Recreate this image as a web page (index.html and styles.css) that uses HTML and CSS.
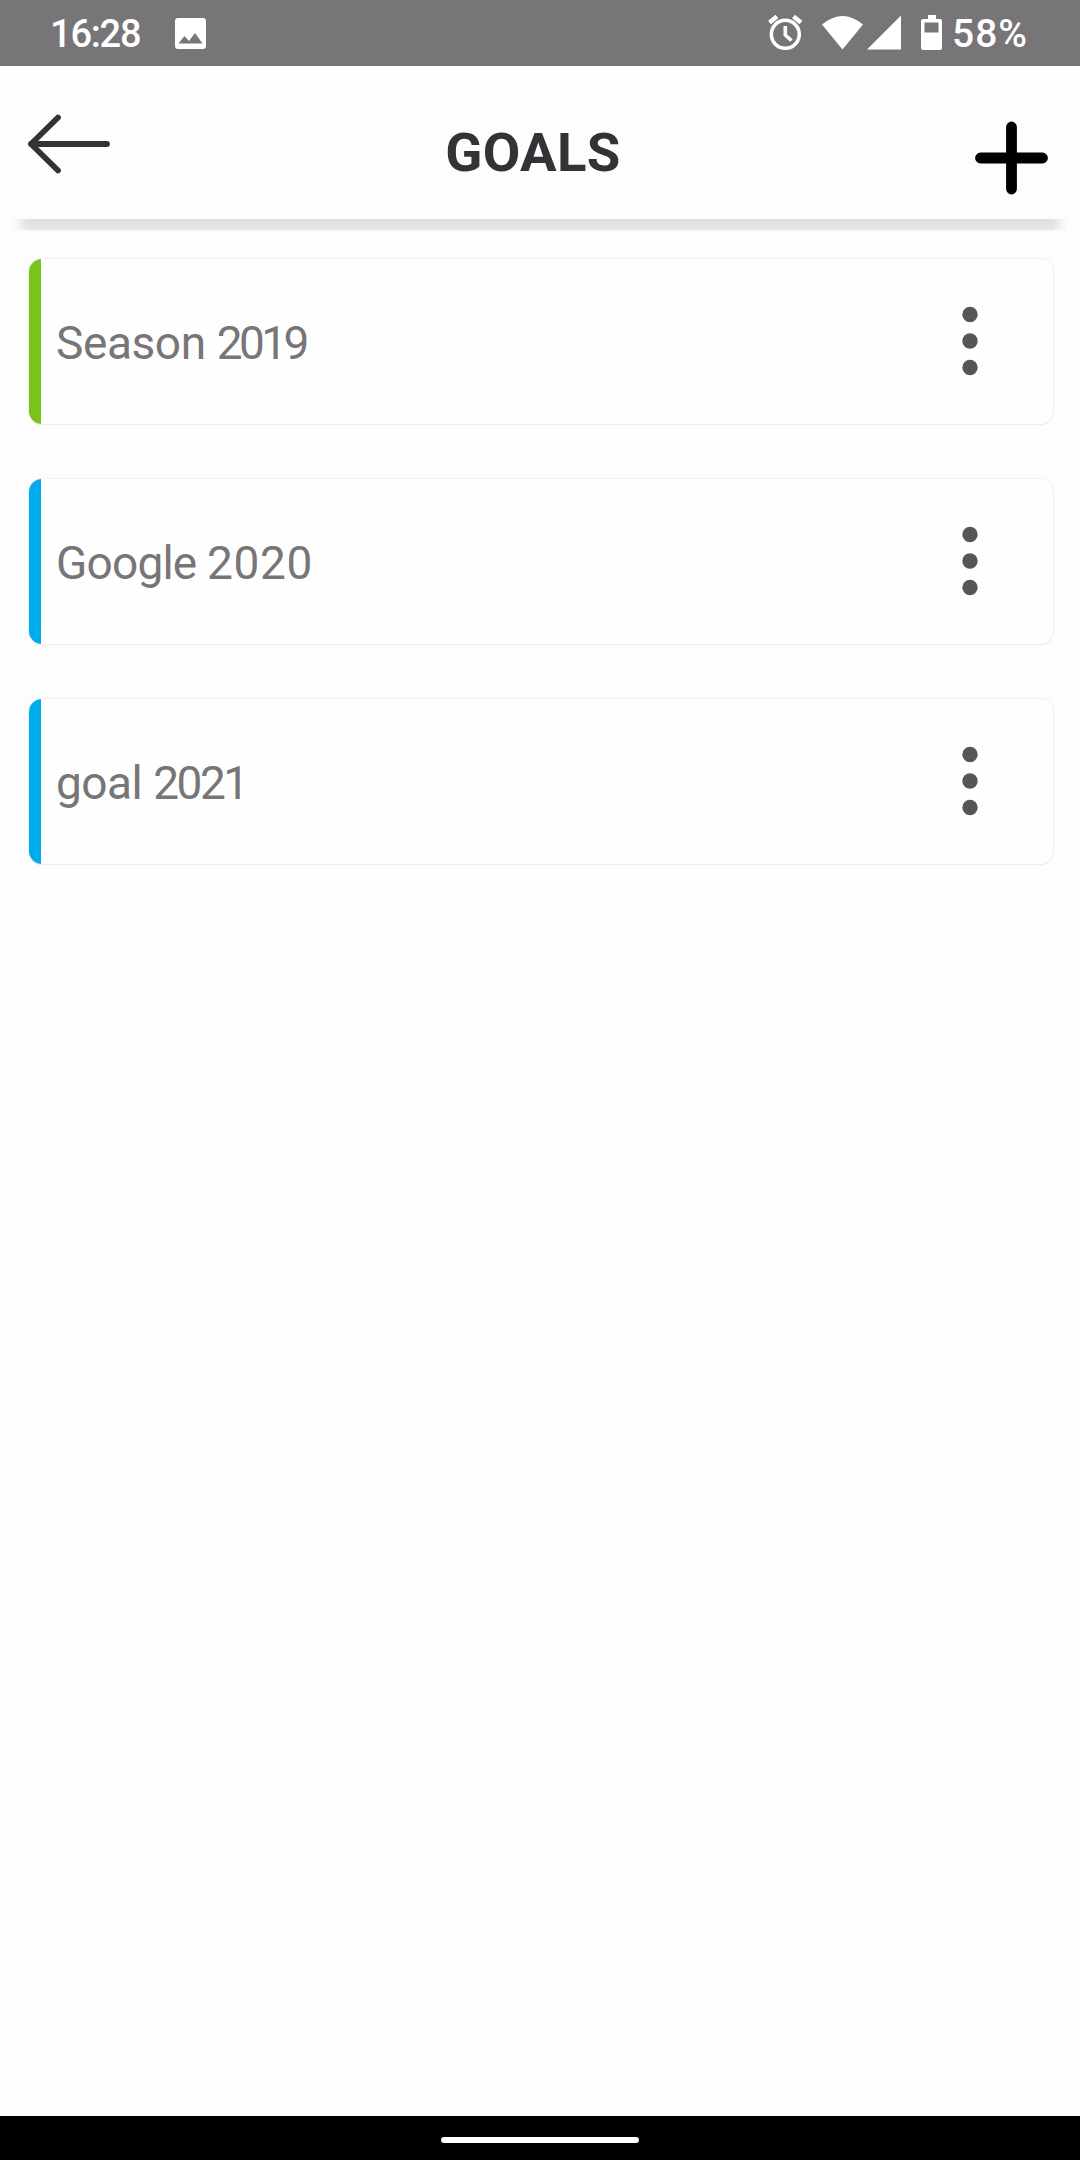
FILE: index.html
```html
<!DOCTYPE html>
<html lang="en">
<head>
<meta charset="utf-8">
<title>Goals</title>
<link rel="stylesheet" href="styles.css">
</head>
<body>
<div class="screen">
  <div class="status">
    <span class="time">16:28</span>
    <svg class="picture" width="31" height="31" viewBox="0 0 31 31"><path fill="#fff" fill-rule="evenodd" d="M3 0H28Q31 0 31 3V28Q31 31 28 31H3Q0 31 0 28V3Q0 0 3 0ZM3.500 25.500H27.500L20 15L14 23L9.500 18Z"/></svg>
    <svg class="signals" width="174" height="38" viewBox="0 0 174 38">
      <g fill="none" stroke="#fff" stroke-width="3.600"><circle cx="17.300" cy="20.300" r="14"/><path d="M17.300 12V21L23.500 26.500"/><path stroke-width="4.500" d="M1.500 8.500L9 2.500M25.500 2.500L33 8.500"/></g>
      <path fill="#fff" d="M54 10.500Q74.500-6.500 95 10.500L74.500 35.500ZM133 1.500V35.500H99Z"/>
      <path fill="#fff" fill-rule="evenodd" d="M160 1H168V5H172Q174 5 174 7V34Q174 36 172 36H155Q153 36 153 34V7Q153 5 155 5H160ZM156.500 8.500V18.500H170.500V8.500Z"/>
    </svg>
    <span class="percent">58%</span>
  </div>
  <header class="header">
    <svg class="back" width="84" height="62" viewBox="0 0 84 62"><path d="M79 31H3M30 4.500L3 31L30 57.500" fill="none" stroke="#343236" stroke-width="5.800" stroke-linecap="round" stroke-linejoin="round"/></svg>
    <h1 class="title">GOALS</h1>
    <svg class="add" width="74" height="74" viewBox="0 0 74 74"><path d="M37.500 6V68M6.500 37H68.500" stroke="#000" stroke-width="10.800" stroke-linecap="round"/></svg>
  </header>
  <div class="shade"></div>
  <main class="goals">
    <div class="goal green"><span class="name season">Season <span class="year tight">2019</span></span><svg class="more" width="16" height="70" viewBox="0 0 16 70"><g fill="#575558"><circle cx="8" cy="8.500" r="7.700"/><circle cx="8" cy="35" r="7.700"/><circle cx="8" cy="61.500" r="7.700"/></g></svg></div>
    <div class="goal"><span class="name">Google <span class="year">2020</span></span><svg class="more" width="16" height="70" viewBox="0 0 16 70"><g fill="#575558"><circle cx="8" cy="8.500" r="7.700"/><circle cx="8" cy="35" r="7.700"/><circle cx="8" cy="61.500" r="7.700"/></g></svg></div>
    <div class="goal"><span class="name last">goal <span class="year">2021</span></span><svg class="more" width="16" height="70" viewBox="0 0 16 70"><g fill="#575558"><circle cx="8" cy="8.500" r="7.700"/><circle cx="8" cy="35" r="7.700"/><circle cx="8" cy="61.500" r="7.700"/></g></svg></div>
  </main>
  <footer class="nav"><div class="handle"></div></footer>
</div>
</body>
</html>
```
FILE: styles.css
```css
* { box-sizing: border-box; }
body { margin: 0; background: #fdfdfd; font-family: Roboto, "Liberation Sans", sans-serif; }
.screen { width: 1080px; height: 2160px; display: flex; flex-direction: column; }
svg { display: block; flex: none; }
.status { height: 66px; flex: none; display: flex; align-items: flex-start; background: #777578; color: #fff; font-size: 38px; line-height: 44px; font-weight: 500; padding: 0 50px; }
.time { width: 125px; padding-top: 12px; letter-spacing: -1.2px; }
.picture { margin-top: 18px; }
.signals { margin: 14px 10px 0 562px; }
.percent { padding-top: 12px; font-size: 39px; letter-spacing: 1px; white-space: nowrap; }
.header { height: 153px; flex: none; display: flex; align-items: flex-start; justify-content: space-between; padding: 0 32px 0 28px; }
.back { margin-top: 46.5px; }
.title { margin: 54px 20px 0 0; font-size: 54.5px; line-height: 64px; font-weight: 700; color: #343236; letter-spacing: 0.3px; }
.add { margin-top: 54.5px; }
.shade { height: 12px; flex: none; margin: 0 12px; background: linear-gradient(90deg, #fdfdfd, transparent 16px, transparent calc(100% - 16px), #fdfdfd), linear-gradient(#e0dee1, #e7e5e8 80%, #f8f7f9); }
.goals { flex: 1; display: flex; flex-direction: column; gap: 55px; padding: 28px 27px 0 29px; }
.goal { height: 165px; display: flex; align-items: center; justify-content: space-between; border-radius: 13px; padding: 0 75.5px 0 27px; background: linear-gradient(90deg, #00abeb 12px, #fefefe 12px); box-shadow: 0 0 1px 1px #f0eff2, 0 1px 1px #dedce0; }
.green { background: linear-gradient(90deg, #79c41a 12px, #fefefe 12px); }
.more { margin-top: -1px; }
.name { font-size: 46px; line-height: 54px; color: #777578; padding-top: 2px; letter-spacing: -0.8px; }
.season { letter-spacing: -0.4px; }
.year { letter-spacing: 0.6px; }
.tight { letter-spacing: -3.6px; }
.last { letter-spacing: -0.5px; }
.last .year { letter-spacing: -2.5px; }
.nav { height: 44px; flex: none; background: #000; display: flex; justify-content: center; padding-top: 21px; }
.handle { width: 198px; height: 6px; border-radius: 3px; background: #fff; }
```
